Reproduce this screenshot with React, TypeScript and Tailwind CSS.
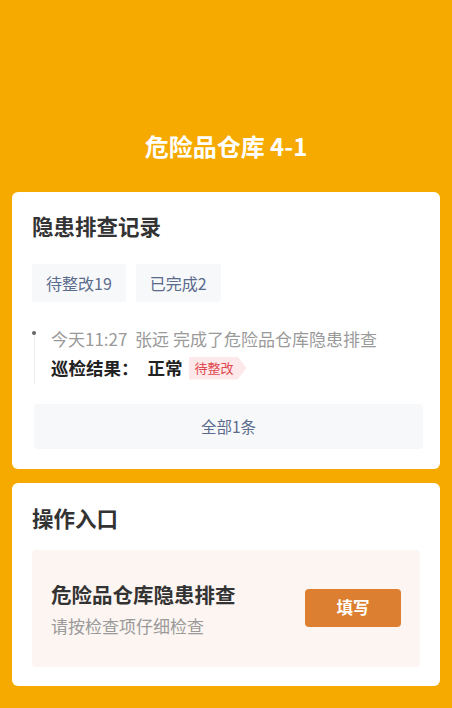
export default function App() {
  return (
    <div
      className="w-[452px] h-[708px] bg-[#f6aa00] flex flex-col px-[12px] overflow-hidden"
      style={{ fontFamily: '"Noto Sans CJK SC", "Noto Sans", sans-serif' }}
    >
      <div className="pt-[129px] pb-[30px] text-center text-white text-[24px] font-bold leading-[33px]">
        危险品仓库 4-1
      </div>

      <div className="bg-white rounded-[6px] px-[20px] pt-[19px] pb-[20px] flex flex-col">
        <div className="text-[21.5px] leading-[30px] font-bold text-[#333]">隐患排查记录</div>
        <div className="flex gap-[10px] mt-[23px]">
          <div className="h-[38px] px-[14px] flex items-center bg-[#f7f8fa] rounded-[2px] text-[16px] text-[#5b6b8c]">
            待整改19
          </div>
          <div className="h-[38px] px-[14px] flex items-center bg-[#f7f8fa] rounded-[2px] text-[16px] text-[#5b6b8c]">
            已完成2
          </div>
        </div>

        <div className="relative mt-[25px] pl-[19px]">
          <div className="absolute left-[0px] top-[4px] w-[4px] h-[4px] rounded-full bg-[#666]" />
          <div className="absolute left-[1.5px] top-[8px] bottom-[-2px] w-px bg-[#eee]" />
          <div className="text-[17px] leading-[24px] text-[#9a9a9a]">今天11:27&nbsp; 张远 完成了危险品仓库隐患排查</div>
          <div className="flex items-center h-[28px] mt-[3px]">
            <span className="text-[17.5px] font-bold text-[#222]">巡检结果：</span>
            <span className="text-[17.5px] font-bold text-[#222] ml-[9px]">正常</span>
            <span className="ml-[6px] h-[23px] pl-[6px] pr-[13px] flex items-center bg-[#fde9ea] text-[#e0474f] text-[13px] [clip-path:polygon(0_0,calc(100%-9px)_0,100%_50%,calc(100%-9px)_100%,0_100%)]">
              待整改
            </span>
          </div>
        </div>

        <div className="mt-[22px] ml-[2px] w-[389px] h-[45px] flex items-center justify-center bg-[#f7f8fa] rounded-[4px] text-[15.5px] text-[#5b6b8c]">
          全部1条
        </div>
      </div>

      <div className="mt-[14px] bg-white rounded-[6px] px-[20px] pt-[20px] pb-[19px] flex flex-col">
        <div className="text-[21.5px] leading-[30px] font-bold text-[#333]">操作入口</div>
        <div className="mt-[17px] h-[117px] bg-[#fcf5f1] rounded-[4px] pl-[19px] pr-[19px] flex items-center justify-between">
          <div className="flex flex-col">
            <div className="text-[20.5px] leading-[28px] font-bold text-[#333]">危险品仓库隐患排查</div>
            <div className="text-[17px] leading-[24px] text-[#9a9a9a] mt-[6px]">请按检查项仔细检查</div>
          </div>
          <div className="w-[96px] h-[38px] mt-[-2px] bg-[#dd7f30] rounded-[4px] flex items-center justify-center text-white text-[16.5px] font-bold">
            填写
          </div>
        </div>
      </div>
    </div>
  );
}
